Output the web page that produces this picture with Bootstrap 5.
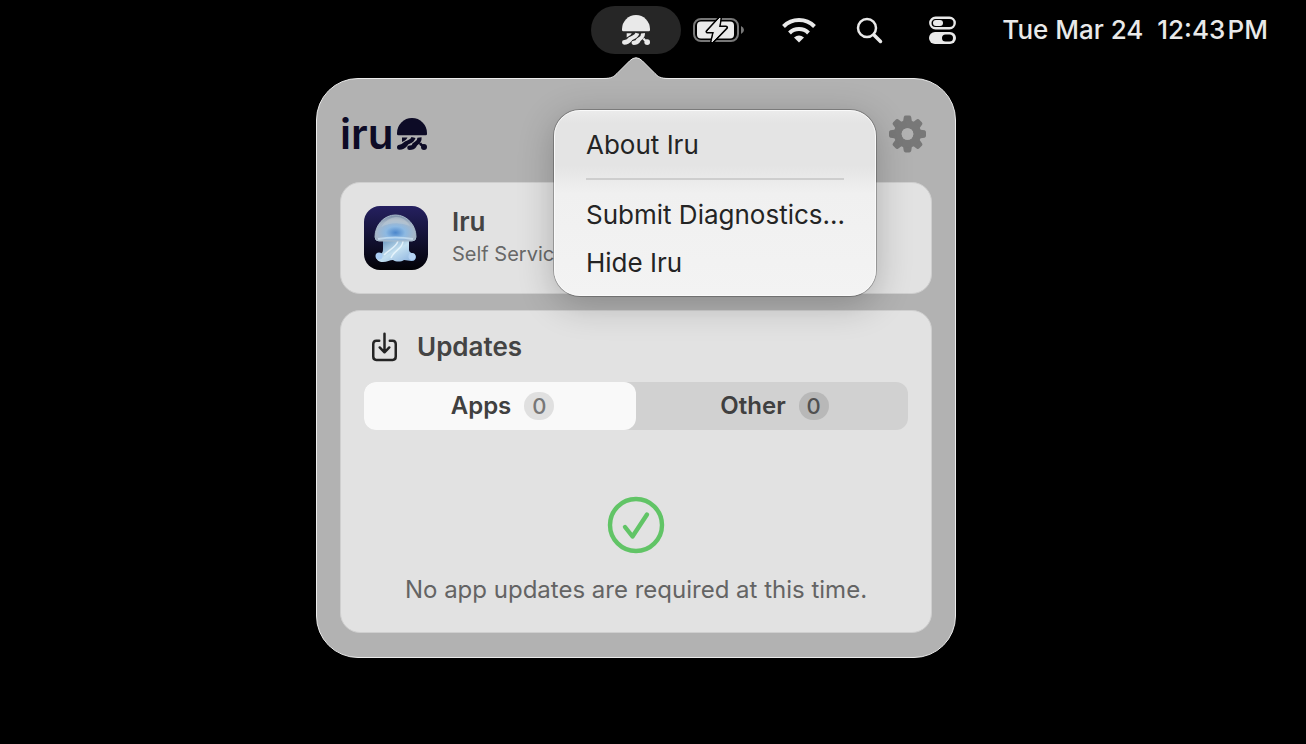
<!DOCTYPE html>
<html lang="en">
<head>
<meta charset="utf-8">
<meta name="viewport" content="width=device-width, initial-scale=1">
<title>Iru</title>
<link href="https://cdn.jsdelivr.net/npm/bootstrap@5.3.0/dist/css/bootstrap.min.css" rel="stylesheet">
<style>
  body { background: #000; font-family: Inter, "Liberation Sans", sans-serif; color: #444; }
  svg { display: block; flex: none; }
  .bar-btn { border: 0; padding: 0; background: none; color: #e9e9e9; }
  .menubar { height: 60px; padding-right: 38px; color: #e9e9e9; }
  .menubar-app { width: 90px; height: 48px; border-radius: 24px; background: #262626; }
  .menubar-status { gap: 40px; margin-left: 38px; }
  .menubar-end { gap: 46px; }
  .clock { font-size: 26px; line-height: 32px; font-weight: 500; color: #e9e9e9; white-space: nowrap; }
  .desktop { padding: 18px 350px 24px 24px; }
  .popover-panel { width: 100%; max-width: 640px; min-width: 560px; border: 1px solid #ebebeb; border-radius: 42px; background: #b2b2b2; padding: 0 23px 24px; }
  .panel-arrow { position: absolute; left: 50%; bottom: 100%; transform: translateX(-50%); margin-bottom: -1px; }
  .panel-head { height: 103px; padding-top: 7px; color: #0d0b26; }
  .wordmark { font-size: 42px; line-height: 48px; font-weight: 600; }
  .gear { color: #787878; margin-right: 6px; }
  .tile { background: #e2e2e2; border: 1px solid #cfcfcf; border-radius: 20px; }
  .app-tile { height: 112px; padding: 0 23px; }
  .updates-tile { padding: 20px 23px 26px; }
  .app-name { font-size: 26px; line-height: 32px; font-weight: 600; }
  .app-sub { font-size: 20px; line-height: 32px; color: #686868; }
  .title-text { font-size: 26px; line-height: 32px; font-weight: 600; }
  .segments { background: #d1d1d1; border-radius: 12px; margin-top: 19px; }
  .segments button { height: 48px; border: 0; border-radius: 12px; background: none; color: #404040; font-size: 24px; font-weight: 600; gap: 13px; padding: 0 0 0 5px; }
  .segments button.active { background: #f9f9f9; }
  .count { width: 30px; height: 28px; border-radius: 14px; background: #b8b8b8; font-size: 22px; line-height: 28px; font-weight: 500; color: #505050; }
  .active .count { background: #e0e0e0; color: #777; }
  .status { margin-top: 66px; }
  .message { font-size: 24px; line-height: 32px; color: #646464; }
  .gear-menu { display: block; top: 31px; right: 79px; width: 322px; padding: 10px 0 8px; border: 1px solid #fafafa; border-radius: 26px;
    background: linear-gradient(#ebebeb 0, #e4e4e4 12px, #e4e4e4 55px, #f0f0f0 82px, #f3f3f3 100%);
    box-shadow: 0 0 0 1px rgba(0,0,0,.25), 0 8px 36px rgba(0,0,0,.24); }
  .gear-menu .dropdown-item { font-size: 26px; line-height: 48px; padding: 0 31px; color: #242424; }
  .gear-menu .dropdown-divider { margin: 9px 31px 11px; border-top: 2px solid #cecece; opacity: 1; }
</style>
</head>
<body>
<svg width="0" height="0" class="position-absolute" aria-hidden="true">
  <symbol id="jelly" viewBox="0 0 30 32">
    <path fill="currentColor" d="M0 16V15a15 15 0 0 1 30 0v1q0 1.300-1.300 1.300H1.300Q0 17.300 0 16z"/>
    <path fill="currentColor" d="M5 19.500h5.500q-1 2.500-5.500 4.500z"/>
    <g fill="none" stroke="currentColor" stroke-linejoin="round">
      <path stroke-width="4.200" d="M16.500 19.500c-1.500 5-5.500 3.500-8 6.500"/>
      <path stroke-width="5" stroke-linecap="round" d="M8.500 26.200q-2.500 3-6 3"/>
      <path stroke-width="4.200" d="M22.500 19.500c.5 5.500-4 5.500-6 8"/>
      <path stroke-width="4.600" stroke-linecap="round" d="M17.500 27.500q-1.500 2.200-5 2.200"/>
      <path stroke-width="2.500" d="M23 25q1 2.500 4 3"/>
    </g>
    <circle cx="27" cy="29" r="3" fill="currentColor"/>
  </symbol>
</svg>

<header class="menubar d-flex align-items-center justify-content-end">
  <button class="bar-btn menubar-app d-flex align-items-center justify-content-center" aria-label="Iru">
    <svg width="28" height="30"><use href="#jelly"/></svg>
  </button>
  <button class="bar-btn ms-2 ps-1" aria-label="Battery charging">
    <svg width="51" height="26" viewBox="0 0 51 26">
      <rect x="1" y="2" width="44" height="22" rx="7" fill="none" stroke="#777" stroke-width="2"/>
      <path d="M48 9q3 1.500 3 4t-3 4z" fill="#777"/>
      <rect x="4" y="4.500" width="37" height="17" rx="4" fill="#e9e9e9"/>
      <path d="M27 1 14.500 14.500h7L19 25l14-14.500h-7.500z" fill="#e9e9e9" stroke="#000" stroke-width="4" stroke-linejoin="round" paint-order="stroke"/>
      <path d="M27 1 14.500 14.500h7L19 25l14-14.500h-7.500z" fill="#e9e9e9" stroke="#e9e9e9" stroke-linejoin="round"/>
    </svg>
  </button>
  <div class="menubar-status d-flex align-items-center">
    <button class="bar-btn" aria-label="Wi-Fi">
      <svg width="34" height="26" viewBox="0 0 34 26" fill="none" stroke="currentColor" stroke-width="4">
        <path d="M1.500 9.500a22 22 0 0 1 31 0M7.500 16a13.500 13.500 0 0 1 19 0"/>
        <path d="M17 25.500l-5-5q5-4 10 0z" fill="currentColor" stroke="none"/>
      </svg>
    </button>
    <div class="menubar-end d-flex align-items-center">
      <button class="bar-btn" aria-label="Search">
        <svg width="27" height="27" viewBox="0 0 27 27" fill="none" stroke="currentColor" stroke-linecap="round">
          <circle cx="11" cy="11" r="9" stroke-width="2.500"/><path d="M18 18l6.500 6.500" stroke-width="3.500"/>
        </svg>
      </button>
      <button class="bar-btn" aria-label="Control Centre">
        <svg width="27" height="28" viewBox="0 0 27 28">
          <rect x="1.300" y="1.800" width="24.400" height="10.400" rx="5.200" fill="none" stroke="currentColor" stroke-width="2.400"/>
          <rect x="4" y="4" width="10" height="6" rx="3" fill="currentColor"/>
          <rect y="16" width="27" height="12" rx="6" fill="currentColor"/>
          <rect x="13" y="18.500" width="11" height="7" rx="3.500" fill="#000"/>
        </svg>
      </button>
      <time class="clock">Tue Mar 24&nbsp; 12:43&#8202;PM</time>
    </div>
  </div>
</header>

<main class="desktop d-flex justify-content-end">
  <section class="popover-panel position-relative" aria-label="Iru">
    <svg class="panel-arrow" width="66" height="24" viewBox="0 0 66 24">
      <path d="M0 22.500c9 0 11-2 14-5L26.500 5q6.500-6.500 13 0L52 17.500c3 3 5 5 14 5V24H0z" fill="#b2b2b2"/>
      <path d="M0 22.500c9 0 11-2 14-5L26.500 5q6.500-6.500 13 0L52 17.500c3 3 5 5 14 5" fill="none" stroke="#ebebeb"/>
    </svg>

    <div class="panel-head d-flex align-items-center">
      <span class="wordmark">iru</span>
      <svg class="ms-1" width="30" height="32"><use href="#jelly"/></svg>
      <button class="bar-btn gear ms-auto" aria-label="Settings" aria-expanded="true">
        <svg width="37" height="38" viewBox="-19 -19 38 38">
          <g fill="currentColor">
            <path id="tooth" d="M-5-10l1.200-7.500q.4-1.500 2-1.500h3.600q1.600 0 2 1.500L5-10z"/>
            <use href="#tooth" transform="rotate(45)"/><use href="#tooth" transform="rotate(90)"/><use href="#tooth" transform="rotate(135)"/>
            <use href="#tooth" transform="rotate(180)"/><use href="#tooth" transform="rotate(225)"/><use href="#tooth" transform="rotate(270)"/><use href="#tooth" transform="rotate(315)"/>
          </g>
          <circle r="10" fill="none" stroke="currentColor" stroke-width="8"/><circle r="6" fill="#b2b2b2"/>
        </svg>
      </button>
      <div class="gear-menu dropdown-menu mt-0">
        <a class="dropdown-item" href="#about">About Iru</a>
        <hr class="dropdown-divider">
        <a class="dropdown-item" href="#diagnostics">Submit Diagnostics...</a>
        <a class="dropdown-item" href="#hide">Hide Iru</a>
      </div>
    </div>

    <div class="tile app-tile d-flex align-items-center">
      <svg width="64" height="64" viewBox="0 0 64 64" aria-hidden="true">
        <defs>
          <linearGradient id="bg" x2="0" y2="1"><stop stop-color="#252060"/><stop offset=".55" stop-color="#11102f"/><stop offset="1" stop-color="#020206"/></linearGradient>
          <radialGradient id="dome" cx=".5" cy=".68" r=".68"><stop stop-color="#4b86cc"/><stop offset=".35" stop-color="#8db9e2"/><stop offset=".7" stop-color="#a6b6c8"/><stop offset="1" stop-color="#7488a2"/></radialGradient>
          <linearGradient id="leg" x2="1" y2="1"><stop stop-color="#5585b4"/><stop offset=".5" stop-color="#c4e0f0"/><stop offset="1" stop-color="#86aede"/></linearGradient>
        </defs>
        <rect width="64" height="64" rx="16" fill="url(#bg)"/>
        <path d="M19 33h26v11c0 2 2 3 4 3.500 4 1 4 7-1 7.500-3 .2-5-1-8-1-3 2-8 2-11 0-3 0-6 2-10 2-7 0-9-6-3-8 3-1 3-3 3-6z" fill="url(#leg)"/>
        <circle cx="15" cy="50" r="3.500" fill="#a9cdf4"/><circle cx="48" cy="50.500" r="3.500" fill="#b4d2f2"/>
        <path d="M34 35c-2 7-10 9-14 14M39 35c0 8-9 9-12 17" fill="none" stroke="#f0faff" stroke-width="1.500" opacity=".75"/>
        <path d="M11 31a20.500 22 0 0 1 41 0q0 4-4 4H15q-4 0-4-4z" fill="url(#dome)" stroke="#a9bccc"/>
        <path d="M17 21q6-9 15-10 9 0 14 9-15-6-29 1z" fill="#c8d2d8" opacity=".4"/>
        <path d="M14 33q17-3 35 0" fill="none" stroke="#cfe6f6" stroke-width="2" opacity=".7"/>
      </svg>
      <div class="ms-4">
        <div class="app-name">Iru</div>
        <div class="app-sub">Self Service</div>
      </div>
    </div>

    <div class="tile updates-tile mt-3">
      <div class="d-flex align-items-center">
        <svg class="ms-2" width="25" height="30" viewBox="0 0 26 30" fill="none" stroke="#242424" stroke-width="2.600" stroke-linecap="round" stroke-linejoin="round">
          <path d="M7.500 8.500h-3Q1.300 8.500 1.300 12v13q0 3.500 3.200 3.500h17q3.200 0 3.200-3.500V12q0-3.500-3.200-3.500h-3M13 1.300V20M8 15.500l5 5 5-5"/>
        </svg>
        <h1 class="title-text mb-0 ms-3 ps-1">Updates</h1>
      </div>
      <div class="segments d-flex" role="tablist">
        <button class="active flex-fill w-50 d-flex align-items-center justify-content-center" role="tab" aria-selected="true">Apps <span class="count">0</span></button>
        <button class="flex-fill w-50 d-flex align-items-center justify-content-center" role="tab" aria-selected="false">Other <span class="count">0</span></button>
      </div>
      <div class="status text-center">
        <svg class="mx-auto" width="58" height="58" viewBox="0 0 58 58" fill="none" stroke="#61c466" stroke-width="4.400" stroke-linecap="round" stroke-linejoin="round">
          <circle cx="29" cy="29" r="26"/><path d="M18 31l7.500 9.500L40 18.500"/>
        </svg>
        <p class="message mb-0 mt-3 pt-1">No app updates are required at this time.</p>
      </div>
    </div>
  </section>
</main>
<script src="https://cdn.jsdelivr.net/npm/bootstrap@5.3.0/dist/js/bootstrap.bundle.min.js"></script>
</body>
</html>
